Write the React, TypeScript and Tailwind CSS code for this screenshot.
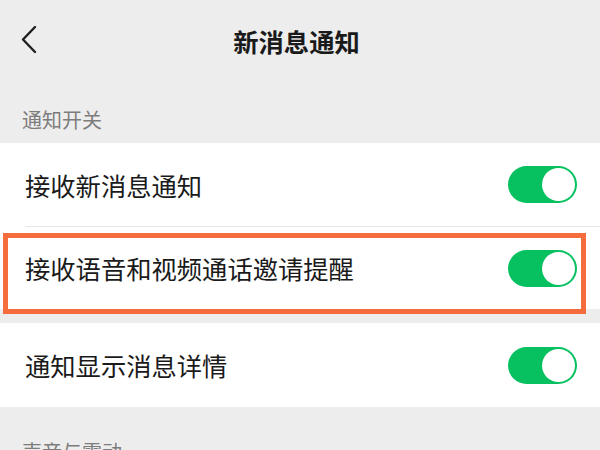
import React from "react";

const FONT = { fontFamily: '"Noto Sans CJK SC", "Noto Sans", sans-serif' };

function Toggle() {
  return (
    <div className="flex h-[37px] w-[69px] items-center justify-end rounded-full bg-[#07c160] pr-[2px]">
      <div className="h-[33px] w-[33px] rounded-full bg-white" />
    </div>
  );
}

function Row({ label, children }: { label: string; children?: React.ReactNode }) {
  return (
    <div className="relative flex h-full items-center justify-between bg-white pl-[25px] pr-[23px]">
      <span className="text-[25.3px] leading-[30px] text-[#1a1a1a]">{label}</span>
      <Toggle />
      {children}
    </div>
  );
}

export default function App() {
  return (
    <div className="h-[450px] w-[600px] overflow-hidden bg-[#ededed]" style={FONT}>
      <div className="relative flex h-[82px] items-center justify-center pr-[7px]">
        <svg
          className="absolute left-[20px] top-[25px]"
          width="20"
          height="30"
          viewBox="0 0 20 30"
          fill="none"
        >
          <polyline points="15,2 3,14.5 15,27" stroke="#1f1f1f" strokeWidth="2.4" strokeLinecap="round" strokeLinejoin="round" />
        </svg>
        <span className="text-[25.3px] font-semibold leading-[30px] text-[#1a1a1a]">新消息通知</span>
      </div>
      <div className="h-[61px] pl-[22px] pt-[26px] text-[20px] leading-[24px] text-[#7d7d7d]">通知开关</div>
      <div className="h-[83px]">
        <Row label="接收新消息通知" />
      </div>
      <div className="flex h-px bg-white">
        <div className="ml-[25px] h-px flex-1 bg-[#e6e6e6]" />
      </div>
      <div className="h-[82px]">
        <Row label="接收语音和视频通话邀请提醒">
          <div className="absolute left-[3px] right-[14px] top-[6px] bottom-[-5px] border-[5px] border-[#f56d3c]" />
        </Row>
      </div>
      <div className="h-[14px]" />
      <div className="h-[84px]">
        <Row label="通知显示消息详情" />
      </div>
      <div className="h-[63px] pl-[22px] pt-[33px] text-[20px] leading-[24px] text-[#7d7d7d]">声音与震动</div>
    </div>
  );
}
